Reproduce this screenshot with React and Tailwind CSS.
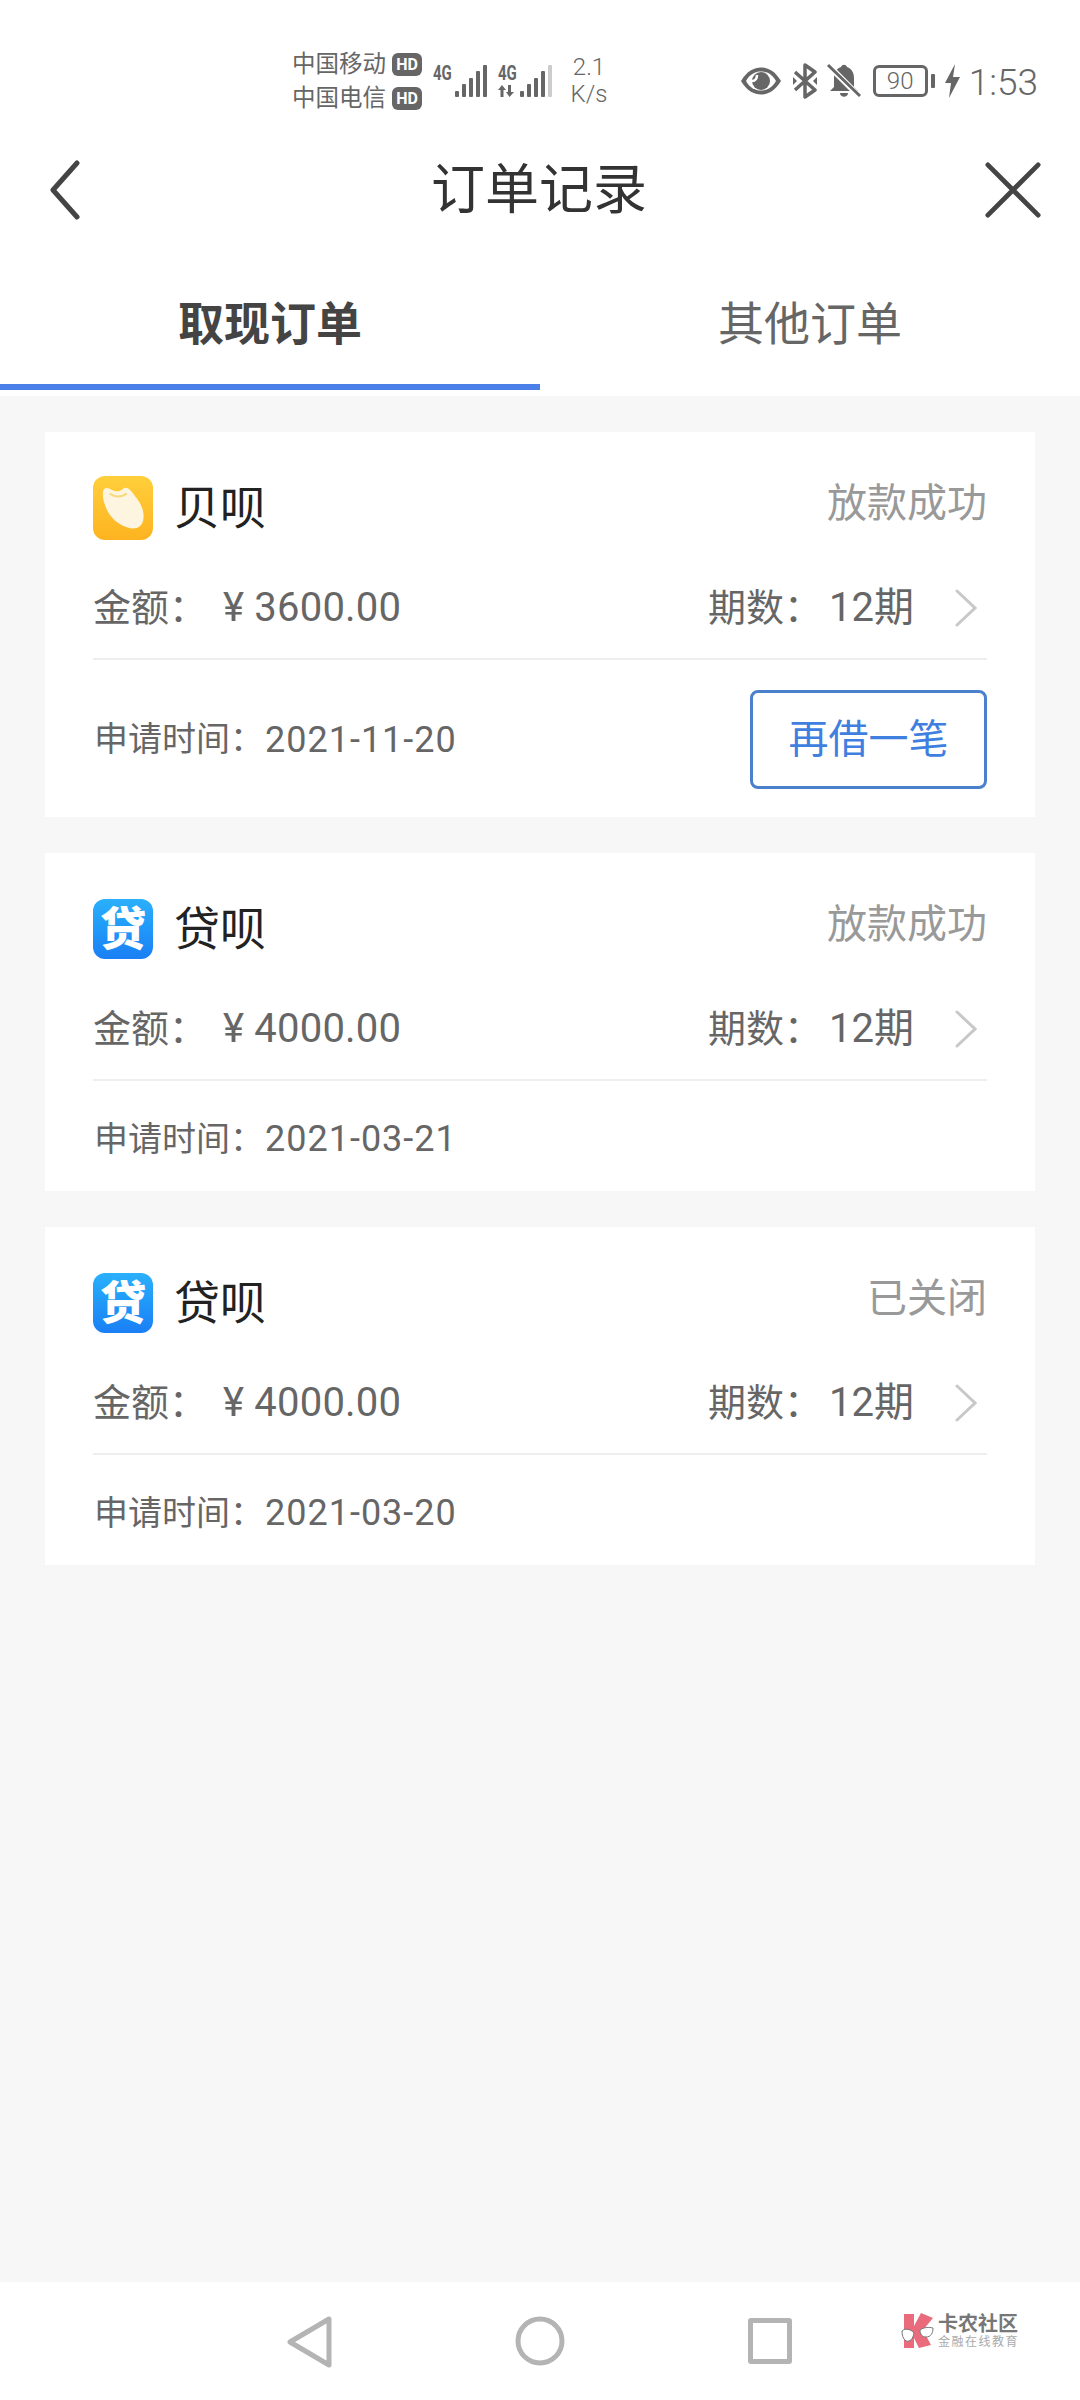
const cjk = { fontFamily: 'Roboto, "Noto Sans CJK SC", sans-serif' };

const orders = [
  { app: 'bei', name: '贝呗', status: '放款成功', amount: '3600.00', date: '2021-11-20', again: true },
  { app: 'dai', name: '贷呗', status: '放款成功', amount: '4000.00', date: '2021-03-21' },
  { app: 'dai', name: '贷呗', status: '已关闭', amount: '4000.00', date: '2021-03-20' },
];

function Signal({ second }) {
  const heights = [6, 13, 19, 26, 32];
  return (
    <div className="relative flex items-end justify-end h-[32px] w-[54px]">
      <span className="absolute left-0 top-0 text-[20px] leading-[16px] font-bold text-[#666]" style={{ transform: 'scaleX(0.75)', transformOrigin: 'left' }}>4G</span>
      {second && (
        <svg className="absolute left-0 bottom-0" width="18" height="12" viewBox="0 0 18 12" fill="#666">
          <path d="M4 0L8 5H5.500V12H2.500V5H0Z" />
          <path d="M10 0H13V7H16L11.500 12L8 7H10Z" />
        </svg>
      )}
      <div className="flex items-end gap-[3px] h-[32px]">
        {heights.map((h, i) => (
          <div
            key={i}
            className={i === 4 && second ? 'w-[4px] bg-[#ccc] rounded-[1px]' : 'w-[4px] bg-[#666] rounded-[1px]'}
            style={{ height: h }}
          />
        ))}
      </div>
    </div>
  );
}

function StatusBar() {
  return (
    <div className="h-[130px] flex items-center pt-[32px] pl-[292px] pr-[42px] text-[#666]">
      <div className="flex flex-col gap-[8px] w-[130px]">
        {['中国移动', '中国电信'].map((c) => (
          <div key={c} className="flex items-center text-[23.500px] leading-[26px]">
            <span className="w-[100px] whitespace-nowrap">{c}</span>
            <span className="w-[30px] h-[23px] rounded-[6px] bg-[#666] text-white text-[16px] leading-[23px] font-bold text-center">HD</span>
          </div>
        ))}
      </div>
      <div className="flex gap-[11px] ml-[11px]">
        <Signal />
        <Signal second />
      </div>
      <div className="ml-[18px] w-[38px] text-[24px] leading-[27px] font-light text-center">
        <div>2.1</div>
        <div>K/s</div>
      </div>
      <div className="ml-auto flex items-center">
        <svg width="42" height="30" viewBox="0 0 42 30">
          <path d="M1 15C7 5 14 1.500 21 1.500S35 5 41 15C35 25 28 28.500 21 28.500S7 25 1 15Z" fill="#666" />
          <path d="M6 15C10 8 15 5.500 21 5.500S32 8 36 15C32 22 27 24.500 21 24.500S10 22 6 15Z" fill="#fff" />
          <circle cx="21" cy="15" r="9" fill="#666" />
          <path d="M12 15C15 15 17 13 17 9" stroke="#fff" strokeWidth="2.500" fill="none" />
        </svg>
        <svg className="ml-[10px]" width="26" height="36" viewBox="0 0 26 36" fill="none" stroke="#666" strokeWidth="3.500" strokeLinejoin="round">
          <path d="M3 9L23 27L13 34V2L23 9L3 27" />
          <path d="M1 14L5 18L1 22ZM25 14L21 18L25 22Z" fill="#666" stroke="none" />
        </svg>
        <svg className="ml-[9px]" width="34" height="36" viewBox="0 0 34 36" fill="#666">
          <path d="M14 4C15 1 19 1 20 4C25 6 27 10 27 15V24L31 28H3L7 24V15C7 10 9 6 14 4Z" />
          <path d="M13 30H21C21 35 13 35 13 30Z" />
          <path d="M2 3L31 32" stroke="#fff" strokeWidth="6" />
          <path d="M1 2L33 33" stroke="#666" strokeWidth="3" />
        </svg>
        <div className="ml-[12px] w-[55px] h-[32px] rounded-[6px] border-[3px] border-[#666] text-[24px] leading-[26px] font-light text-center">90</div>
        <div className="ml-[3px] w-[4px] h-[14px] bg-[#666] rounded-[1px]" />
        <svg className="ml-[10px]" width="15" height="34" viewBox="0 0 15 34" fill="#666">
          <path d="M10 0L0 19H6L4 34L15 13H8Z" />
        </svg>
        <span className="ml-[9px] mb-[-3px] text-[37px] leading-[40px] font-light">1:53</span>
      </div>
    </div>
  );
}

function NavBar() {
  return (
    <div className="h-[120px] grid grid-cols-[1fr_auto_1fr] items-center pl-[40px] pr-[38px]">
      <svg width="44" height="60" viewBox="0 0 44 60" fill="none" stroke="#444" strokeWidth="5" strokeLinecap="round" strokeLinejoin="round">
        <path d="M37 3L13 30L37 57" />
      </svg>
      <span className="text-[54px] leading-[70px] text-[#333] mt-[2px] ml-[-4px]">订单记录</span>
      <svg className="justify-self-end" width="58" height="58" viewBox="0 0 60 60" fill="none" stroke="#444" strokeWidth="5" strokeLinecap="round">
        <path d="M4 4L56 56M56 4L4 56" />
      </svg>
    </div>
  );
}

function Tabs() {
  return (
    <div className="h-[146px] grid grid-cols-2">
      <div className="flex flex-col">
        <div className="flex-1 flex items-center justify-center pt-[14px] text-[46px] font-bold text-[#444]">取现订单</div>
        <div className="h-[6px] bg-[#4a80e8] mb-[6px]" />
      </div>
      <div className="flex flex-col">
        <div className="flex-1 flex items-center justify-center pt-[14px] pb-[12px] text-[46px] text-[#666]">其他订单</div>
      </div>
    </div>
  );
}

function AppIcon({ app }) {
  if (app === 'bei') {
    return (
      <div className="w-[60px] h-[64px] my-[-1px] rounded-[12px] bg-gradient-to-b from-[#ffcf3a] to-[#fdb31f] flex items-center justify-center">
        <svg width="46" height="48" viewBox="0 0 48 48">
          <path d="M3 8C3 3 7 2 10 4C16 8 21 7 25 3C29 2 33 6 36 11C43 19 47 28 45 37C43 45 36 47 28 44C17 41 8 31 5 20C3 15 3 12 3 8Z" fill="#fdf5df" />
          <path d="M10 9C16 13 22 13 28 9" fill="none" stroke="#f6d97c" strokeWidth="2" />
        </svg>
      </div>
    );
  }
  return (
    <div className="w-[60px] h-[60px] rounded-[12px] bg-gradient-to-b from-[#2bb0fb] to-[#1b7ff5] flex items-center justify-center text-white text-[46px] leading-[60px] font-black">
      贷
    </div>
  );
}

function DateLabel({ date }) {
  return (
    <div className="flex items-center text-[34px] text-[#666] pl-[1px]">
      <span className="w-[171px] whitespace-nowrap">申请时间：</span>
      <span className="text-[36px] tracking-[1px]">{date}</span>
    </div>
  );
}

function OrderCard({ order }) {
  return (
    <div className="bg-white px-[48px]">
      <div className="flex items-center justify-between pt-[44px]">
        <div className="flex items-center gap-[21px]">
          <AppIcon app={order.app} />
          <span className="text-[46px] leading-[60px] text-[#222]">{order.name}</span>
        </div>
        <span className="text-[40px] leading-[56px] text-[#999] mb-[8px]">{order.status}</span>
      </div>
      <div className="flex items-center justify-between h-[60px] mt-[38px] text-[38px] text-[#666]">
        <div className="flex items-center">
          <span className="w-[130px] whitespace-nowrap">金额：</span>
          <span className="text-[40px] tracking-[0.200px]">¥ {order.amount}</span>
        </div>
        <div className="flex items-center">
          <span className="w-[121px] whitespace-nowrap">期数：</span>
          <span className="text-[40px]">12期</span>
          <svg className="ml-[41px] mr-[10px]" width="22" height="40" viewBox="0 0 22 40" fill="none" stroke="#c8c8c8" strokeWidth="3" strokeLinecap="round">
            <path d="M2 3L20 20L2 37" />
          </svg>
        </div>
      </div>
      <div className="h-[2px] bg-[#eee] mt-[20px]" />
      {order.again ? (
        <div className="flex items-center justify-between pt-[30px] pb-[28px]">
          <DateLabel date={order.date} />
          <div className="w-[237px] h-[99px] rounded-[8px] border-[3px] border-[#4a80cc] flex items-center justify-center text-[40px] text-[#3f7fe0]">再借一笔</div>
        </div>
      ) : (
        <div className="h-[110px] flex items-center pt-[6px]">
          <DateLabel date={order.date} />
        </div>
      )}
    </div>
  );
}

function BottomBar() {
  return (
    <div className="relative h-[118px] bg-white flex items-start justify-center pt-[34px]">
      <div className="grid grid-cols-3 w-[690px] justify-items-center">
        <svg width="46" height="52" viewBox="0 0 46 52" fill="none" stroke="#b4b4b4" strokeWidth="5" strokeLinejoin="round">
          <path d="M42 3V49L3 26Z" />
        </svg>
        <svg width="50" height="50" viewBox="0 0 50 50" fill="none" stroke="#b4b4b4" strokeWidth="5">
          <circle cx="25" cy="25" r="22" />
        </svg>
        <div className="w-[44px] h-[46px] mt-[2px] rounded-[3px] border-[5px] border-[#b4b4b4]" />
      </div>
      <div className="absolute left-[900px] top-[31px] flex items-center gap-[4px]">
        <svg width="34" height="36" viewBox="0 0 34 36">
          <path d="M4 1H14V13L21 0L33 5L23 17L31 32L19 35L14 25V35H4Z" fill="#ea6b7b" />
          <path d="M2 18C5 15 11 16 14 20C13 26 10 29 6 28C3 26 2 22 2 18Z" fill="#fff" stroke="#777" strokeWidth="1" />
          <path d="M20 17C24 14 29 14 33 15C33 20 31 24 26 24C22 24 20 21 20 17Z" fill="#fff" stroke="#777" strokeWidth="1" />
        </svg>
        <div className="flex flex-col">
          <span className="text-[20px] leading-[22px] font-bold text-[#777] whitespace-nowrap">卡农社区</span>
          <span className="text-[12px] leading-[14px] text-[#aaa] tracking-[1.500px] whitespace-nowrap">金融在线教育</span>
        </div>
      </div>
    </div>
  );
}

export default function App() {
  return (
    <div className="w-[1080px] h-[2400px] flex flex-col bg-white overflow-hidden" style={cjk}>
      <StatusBar />
      <NavBar />
      <Tabs />
      <div className="flex-1 bg-[#f7f7f7] pt-[36px] px-[45px] flex flex-col gap-[36px]">
        {orders.map((o, i) => (
          <OrderCard key={i} order={o} />
        ))}
      </div>
      <BottomBar />
    </div>
  );
}
